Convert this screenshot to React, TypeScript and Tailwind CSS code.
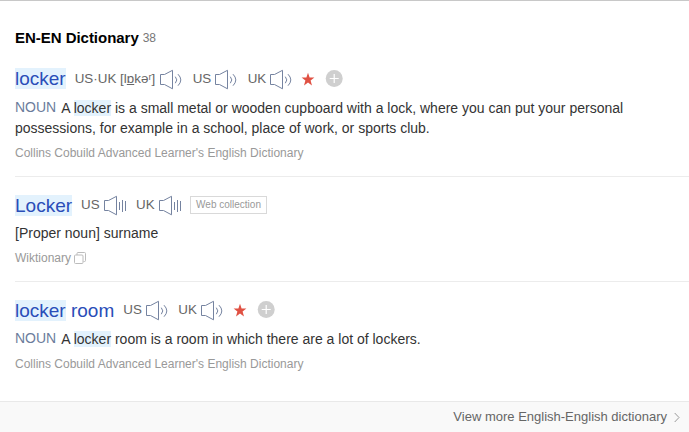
import type { ReactNode } from "react";

function Speaker({ bars = false }: { bars?: boolean }) {
  return (
    <svg className="h-[22px] w-[24px] shrink-0" viewBox="0 0 24 22" fill="none" stroke="#7583a0">
      <path d="M1.5 6.5V16.5H5.5L13.5 20.8V2.3L5.5 6.5Z" />
      {bars ? (
        <path d="M16.5 8V16M19.5 6V18M22.5 7V17" />
      ) : (
        <path d="M16.3 8.7Q19.3 11.9 16.3 15.2M19 6.2Q24.6 11.9 19 17.7" />
      )}
    </svg>
  );
}

function Voice({ label, bars, className }: { label: ReactNode; bars?: boolean; className: string }) {
  return (
    <span className={`flex h-[22px] items-center whitespace-pre text-[13.4px] text-[#666] ${className}`}>
      <span className="grow">{label}</span>
      <Speaker bars={bars} />
    </span>
  );
}

function Marks({ className }: { className: string }) {
  return (
    <span className={`flex items-center ${className}`}>
      <svg className="h-[16px] w-[16px]" viewBox="0 0 16 16" fill="#e05143">
        <path d="M8 1.7L9.6 6.4H14.4L10.6 9.4L12 14.4L8 11.5L4 14.4L5.4 9.4L1.6 6.4H6.4Z" />
      </svg>
      <svg className="ml-[9px] h-[18px] w-[18px]" viewBox="0 0 18 18">
        <circle cx="9.2" cy="8.5" r="8.5" fill="#cfcfcf" />
        <path d="M4.7 8.5H13.7M9.2 4V13" stroke="#fff" strokeWidth="1.2" />
      </svg>
    </span>
  );
}

function Mark({ children }: { children: ReactNode }) {
  return <span className="bg-[#e3f2fd]">{children}</span>;
}

function Word({ children, className = "" }: { children: ReactNode; className?: string }) {
  return <span className={`whitespace-nowrap text-[19px] leading-[22px] text-[#2a4db8] ${className}`}>{children}</span>;
}

function Source({ children }: { children: ReactNode }) {
  return <div className="mt-[7px] flex h-4 items-center text-[12px] text-[#999]">{children}</div>;
}

function Noun() {
  return <span className="mr-[5px] align-[1px] leading-none text-[#6b7c9c]">NOUN</span>;
}

export default function App() {
  return (
    <main className="flex h-[432px] w-[689px] flex-col overflow-hidden border-t border-[#c8c8c8] bg-white font-['Liberation_Sans',Arial,sans-serif] text-[14px] leading-5 text-[#333]">
      <div className="grow pl-[15px]">
        <h2 className="mt-[27px] flex h-5 items-center text-[15px] font-bold tracking-[-0.03px] text-black">
          EN-EN Dictionary
          <span className="ml-1 text-[12px] font-normal text-[#777]">38</span>
        </h2>
        <section className="mt-5 h-[109px] border-b border-[#ececec]">
          <div className="flex h-[22px] items-center">
            <Word><Mark>locker</Mark></Word>
            <Voice className="ml-[9px] w-[108px]" label={<>US·UK [l<u className="underline-offset-1">ɒ</u>kəʳ]</>} />
            <Voice className="ml-[10px] w-[45px]" label="US" />
            <Voice className="ml-[10px] w-[45px]" label="UK" />
            <Marks className="ml-[7px]" />
          </div>
          <p className="mt-2 w-[640px]">
            <Noun />A <Mark>locker</Mark> is a small metal or wooden cupboard with a lock, where you can put your personal possessions, for example in a school, place of work, or sports club.
          </p>
          <Source>Collins Cobuild Advanced Learner's English Dictionary</Source>
        </section>
        <section className="mt-[17px] h-[88px] border-b border-[#ececec]">
          <div className="flex h-[22px] items-center">
            <Word className="pt-[2px]"><Mark>Locker</Mark></Word>
            <Voice bars className="ml-[9px] w-[46px]" label="US" />
            <Voice bars className="ml-[9px] w-[46px]" label="UK" />
            <span className="ml-[8px] flex h-[18px] w-[77px] items-center justify-center border border-[#d9d9d9] text-[10px] text-[#999]">Web collection</span>
          </div>
          <p className="mt-[7px]">[Proper noun] surname</p>
          <Source>
            Wiktionary
            <svg className="ml-[3px] h-[13px] w-[13px]" viewBox="0 0 13 13" fill="none" stroke="#bcbcbc">
              <path d="M3 3V1.5Q3 .5 4 .5H10.5Q11.5 .5 11.5 1.5V8.5Q11.5 9.5 10.5 9.5H9.5" />
              <rect x=".5" y="3" width="8.5" height="8.5" rx="1" />
            </svg>
          </Source>
        </section>
        <section className="mt-[17px]">
          <div className="flex h-[22px] items-center">
            <Word className="pt-[2px]"><Mark>locker</Mark> room</Word>
            <Voice className="ml-[9px] w-[46px]" label="US" />
            <Voice className="ml-[9px] w-[46px]" label="UK" />
            <Marks className="ml-[8px]" />
          </div>
          <p className="mt-2">
            <Noun />A <Mark>locker</Mark> room is a room in which there are a lot of lockers.
          </p>
          <Source>Collins Cobuild Advanced Learner's English Dictionary</Source>
        </section>
      </div>
      <footer className="flex h-[31px] shrink-0 items-center justify-end border-t border-[#e9e9e9] bg-[#f9f9f9] pr-[9px] text-[13px] text-[#666]">
        View more English-English dictionary
        <svg className="ml-[7px] h-[11px] w-[6px]" viewBox="0 0 6 11" fill="none" stroke="#999">
          <path d="M.7 1L5 5.5L.7 10" />
        </svg>
      </footer>
    </main>
  );
}
